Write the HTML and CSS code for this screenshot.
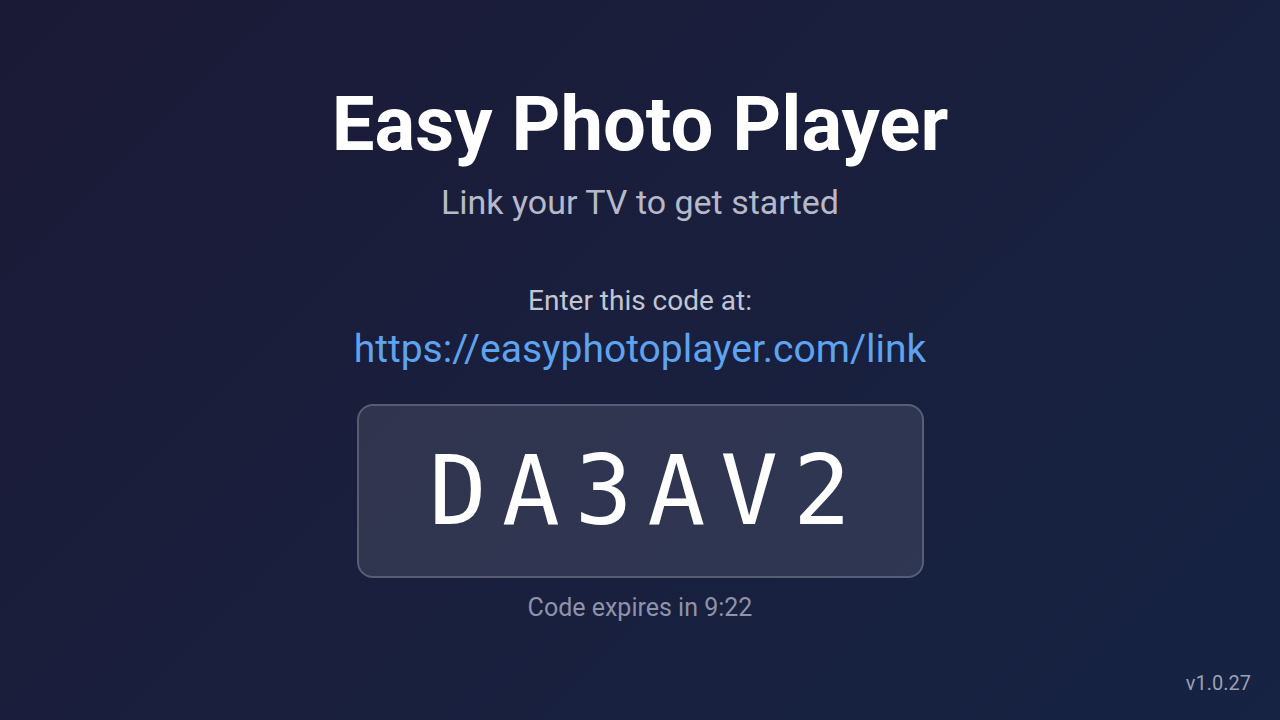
FILE: index.html
```html
<!DOCTYPE html>
<html lang="en">
<head>
<meta charset="utf-8">
<title>Easy Photo Player</title>
<link rel="stylesheet" href="styles.css">
</head>
<body>
<main class="screen">
  <section class="content">
    <h1 class="title">Easy Photo Player</h1>
    <p class="subtitle">Link your TV to get started</p>
    <p class="instruction">Enter this code at:</p>
    <p class="url">https://easyphotoplayer.com/link</p>
    <div class="code-card">
      <span class="code">DA3AV2</span>
    </div>
    <p class="expires">Code expires in 9:22</p>
  </section>
  <div class="version">v1.0.27</div>
</main>
</body>
</html>
```

FILE: styles.css
```css
html, body {
  margin: 0;
  padding: 0;
  width: 1280px;
  height: 720px;
  overflow: hidden;
}

body {
  font-family: Roboto, "Noto Sans", sans-serif;
  color: #ffffff;
}

.screen {
  position: relative;
  box-sizing: border-box;
  width: 1280px;
  height: 720px;
  padding-top: 80px;
  background: linear-gradient(135deg, #1b1a36 0%, #191f3d 50%, #162343 100%);
  display: flex;
  justify-content: center;
}

.content {
  display: flex;
  flex-direction: column;
  align-items: center;
}

.title {
  margin: 0;
  font-size: 76px;
  font-weight: 700;
  line-height: 88px;
}

.subtitle {
  margin: 14px 0 0;
  font-size: 34px;
  line-height: 40px;
  color: #b6b9c9;
}

.instruction {
  margin: 62px 0 0;
  font-size: 28px;
  line-height: 34px;
  color: #c2c5d2;
}

.url {
  margin: 8px 0 0;
  font-size: 39px;
  line-height: 46px;
  color: #5ea3ef;
}

.code-card {
  margin-top: 32px;
  box-sizing: border-box;
  width: 567px;
  height: 174px;
  border: 2px solid rgba(255, 255, 255, 0.2);
  border-radius: 16px;
  background: rgba(255, 255, 255, 0.1);
  display: flex;
  align-items: center;
  justify-content: center;
}

.code {
  font-family: "DejaVu Sans Mono", "Liberation Mono", monospace;
  font-size: 96px;
  line-height: 110px;
  letter-spacing: 15px;
  padding-left: 15px;
  color: #ffffff;
}

.expires {
  margin: 15px 0 0;
  font-size: 25px;
  line-height: 30px;
  color: #8e93a9;
}

.version {
  position: absolute;
  right: 29px;
  bottom: 25px;
  font-size: 20px;
  line-height: 24px;
  color: #9aa0b5;
}
```
